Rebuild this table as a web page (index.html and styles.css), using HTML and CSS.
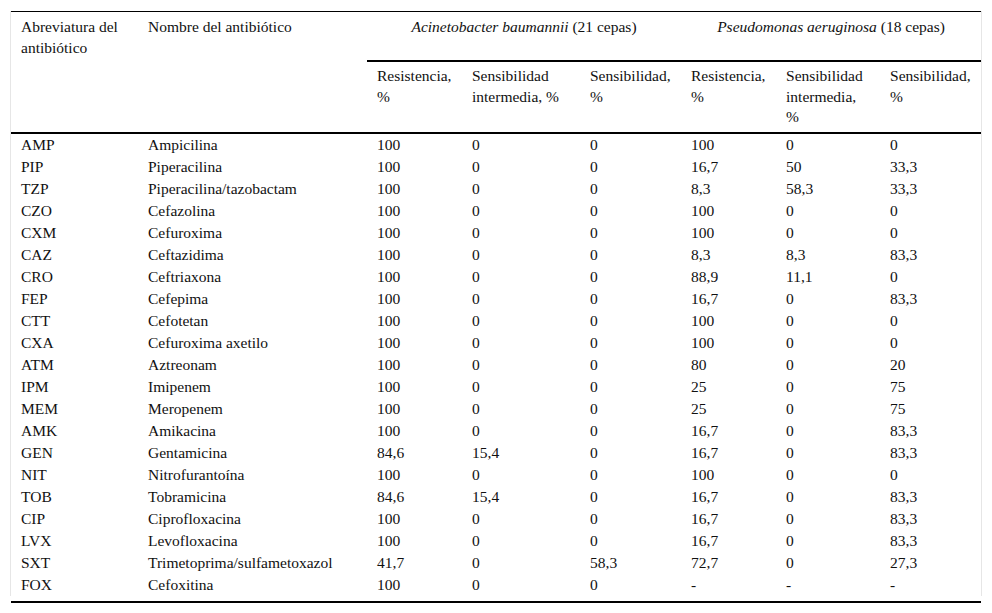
FILE: index.html
```html
<!DOCTYPE html>
<html lang="es">
<head>
<meta charset="utf-8">
<title>Tabla</title>
<link rel="stylesheet" href="styles.css">
</head>
<body>
<div class="frame">
<table class="tbl">
<colgroup>
<col class="c1"><col class="c2"><col class="c3"><col class="c4"><col class="c5"><col class="c6"><col class="c7"><col class="c8">
</colgroup>
<thead>
<tr class="h1">
<th>Abreviatura del antibiótico</th>
<th>Nombre del antibiótico</th>
<th colspan="3" class="grp"><i>Acinetobacter baumannii</i> (21 cepas)</th>
<th colspan="3" class="grp"><i>Pseudomonas aeruginosa</i> (18 cepas)</th>
</tr>
<tr class="h2">
<th></th>
<th></th>
<th class="sub">Resistencia, %</th>
<th class="sub">Sensibilidad intermedia, %</th>
<th class="sub">Sensibilidad, %</th>
<th class="sub">Resistencia, %</th>
<th class="sub">Sensibilidad intermedia, %</th>
<th class="sub">Sensibilidad, %</th>
</tr>
</thead>
<tbody>
<tr><td>AMP</td><td>Ampicilina</td><td>100</td><td>0</td><td>0</td><td>100</td><td>0</td><td>0</td></tr>
<tr><td>PIP</td><td>Piperacilina</td><td>100</td><td>0</td><td>0</td><td>16,7</td><td>50</td><td>33,3</td></tr>
<tr><td>TZP</td><td>Piperacilina/tazobactam</td><td>100</td><td>0</td><td>0</td><td>8,3</td><td>58,3</td><td>33,3</td></tr>
<tr><td>CZO</td><td>Cefazolina</td><td>100</td><td>0</td><td>0</td><td>100</td><td>0</td><td>0</td></tr>
<tr><td>CXM</td><td>Cefuroxima</td><td>100</td><td>0</td><td>0</td><td>100</td><td>0</td><td>0</td></tr>
<tr><td>CAZ</td><td>Ceftazidima</td><td>100</td><td>0</td><td>0</td><td>8,3</td><td>8,3</td><td>83,3</td></tr>
<tr><td>CRO</td><td>Ceftriaxona</td><td>100</td><td>0</td><td>0</td><td>88,9</td><td>11,1</td><td>0</td></tr>
<tr><td>FEP</td><td>Cefepima</td><td>100</td><td>0</td><td>0</td><td>16,7</td><td>0</td><td>83,3</td></tr>
<tr><td>CTT</td><td>Cefotetan</td><td>100</td><td>0</td><td>0</td><td>100</td><td>0</td><td>0</td></tr>
<tr><td>CXA</td><td>Cefuroxima axetilo</td><td>100</td><td>0</td><td>0</td><td>100</td><td>0</td><td>0</td></tr>
<tr><td>ATM</td><td>Aztreonam</td><td>100</td><td>0</td><td>0</td><td>80</td><td>0</td><td>20</td></tr>
<tr><td>IPM</td><td>Imipenem</td><td>100</td><td>0</td><td>0</td><td>25</td><td>0</td><td>75</td></tr>
<tr><td>MEM</td><td>Meropenem</td><td>100</td><td>0</td><td>0</td><td>25</td><td>0</td><td>75</td></tr>
<tr><td>AMK</td><td>Amikacina</td><td>100</td><td>0</td><td>0</td><td>16,7</td><td>0</td><td>83,3</td></tr>
<tr><td>GEN</td><td>Gentamicina</td><td>84,6</td><td>15,4</td><td>0</td><td>16,7</td><td>0</td><td>83,3</td></tr>
<tr><td>NIT</td><td>Nitrofurantoína</td><td>100</td><td>0</td><td>0</td><td>100</td><td>0</td><td>0</td></tr>
<tr><td>TOB</td><td>Tobramicina</td><td>84,6</td><td>15,4</td><td>0</td><td>16,7</td><td>0</td><td>83,3</td></tr>
<tr><td>CIP</td><td>Ciprofloxacina</td><td>100</td><td>0</td><td>0</td><td>16,7</td><td>0</td><td>83,3</td></tr>
<tr><td>LVX</td><td>Levofloxacina</td><td>100</td><td>0</td><td>0</td><td>16,7</td><td>0</td><td>83,3</td></tr>
<tr><td>SXT</td><td>Trimetoprima/sulfametoxazol</td><td>41,7</td><td>0</td><td>58,3</td><td>72,7</td><td>0</td><td>27,3</td></tr>
<tr><td>FOX</td><td>Cefoxitina</td><td>100</td><td>0</td><td>0</td><td>-</td><td>-</td><td>-</td></tr>
</tbody>
</table>
</div>
<div class="endrule"></div>
</body>
</html>
```

FILE: styles.css
```css
html, body {
  margin: 0;
  padding: 0;
  background: #fff;
}
body {
  font-family: "Liberation Serif", "Times New Roman", serif;
  font-size: 15.5px;
  color: #111;
}
.frame {
  margin: 11px 0 0 10px;
  width: 970px;
  border-left: 1px solid #e6e6e6;
  border-right: 1px solid #e6e6e6;
}
.tbl {
  width: 970px;
  border-collapse: collapse;
  table-layout: fixed;
  border-top: 1px solid #000;
  font-size: 15.5px;
}
.c1 { width: 127px; }
.c2 { width: 229px; }
.c3 { width: 95px; }
.c4 { width: 118px; }
.c5 { width: 101px; }
.c6 { width: 95px; }
.c7 { width: 104px; }
.c8 { width: 101px; }
.tbl th {
  font-weight: normal;
  text-align: left;
  vertical-align: top;
  line-height: 20.5px;
  padding: 5px 10px 3px 10px;
}
.tbl th.grp {
  text-align: center;
  border-bottom: 2px solid #000;
}
.tbl .h2 th {
  padding: 4px 10px 4px 10px;
  border-bottom: 2px solid #000;
}
.tbl td {
  line-height: 20px;
  padding: 1px 10px;
  vertical-align: top;
  white-space: nowrap;
}
.endrule {
  margin: 5px 0 0 11px;
  width: 970px;
  border-top: 2px solid #000;
}
```
